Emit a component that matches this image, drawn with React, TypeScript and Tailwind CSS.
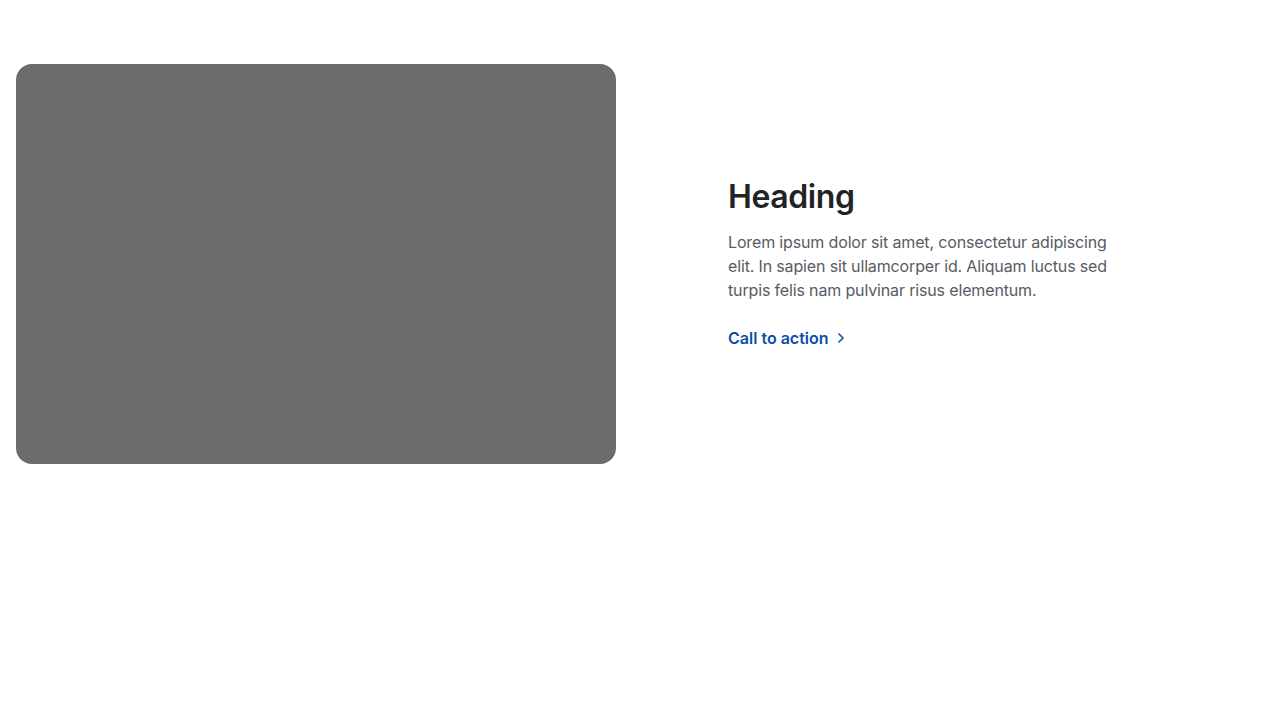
import { ChevronRight } from "lucide-react";

export default function App() {
  return (
    <main className="min-h-screen w-full bg-white font-['Inter',sans-serif]">
      <section className="flex items-center px-4 pt-16">
        <div className="h-[400px] w-[600px] shrink-0 rounded-2xl bg-[#6b6b6b]" />

        <div className="ml-[112px] flex w-[400px] flex-col pb-px">
          <h2 className="text-[32px] font-semibold leading-10 tracking-[-0.4px] text-[#222326]">
            Heading
          </h2>
          <p className="mt-[13px] text-base leading-6 tracking-[-0.15px] text-[#575b63]">
            Lorem ipsum dolor sit amet, consectetur adipiscing elit. In sapien
            sit ullamcorper id. Aliquam luctus sed turpis felis nam pulvinar
            risus elementum.
          </p>
          <a
            href="#"
            className="mt-6 flex items-center gap-1 text-base font-semibold leading-6 text-[#0b4ea6]"
          >
            Call to action
            <ChevronRight className="h-4 w-4" strokeWidth={2.5} />
          </a>
        </div>
      </section>
    </main>
  );
}
